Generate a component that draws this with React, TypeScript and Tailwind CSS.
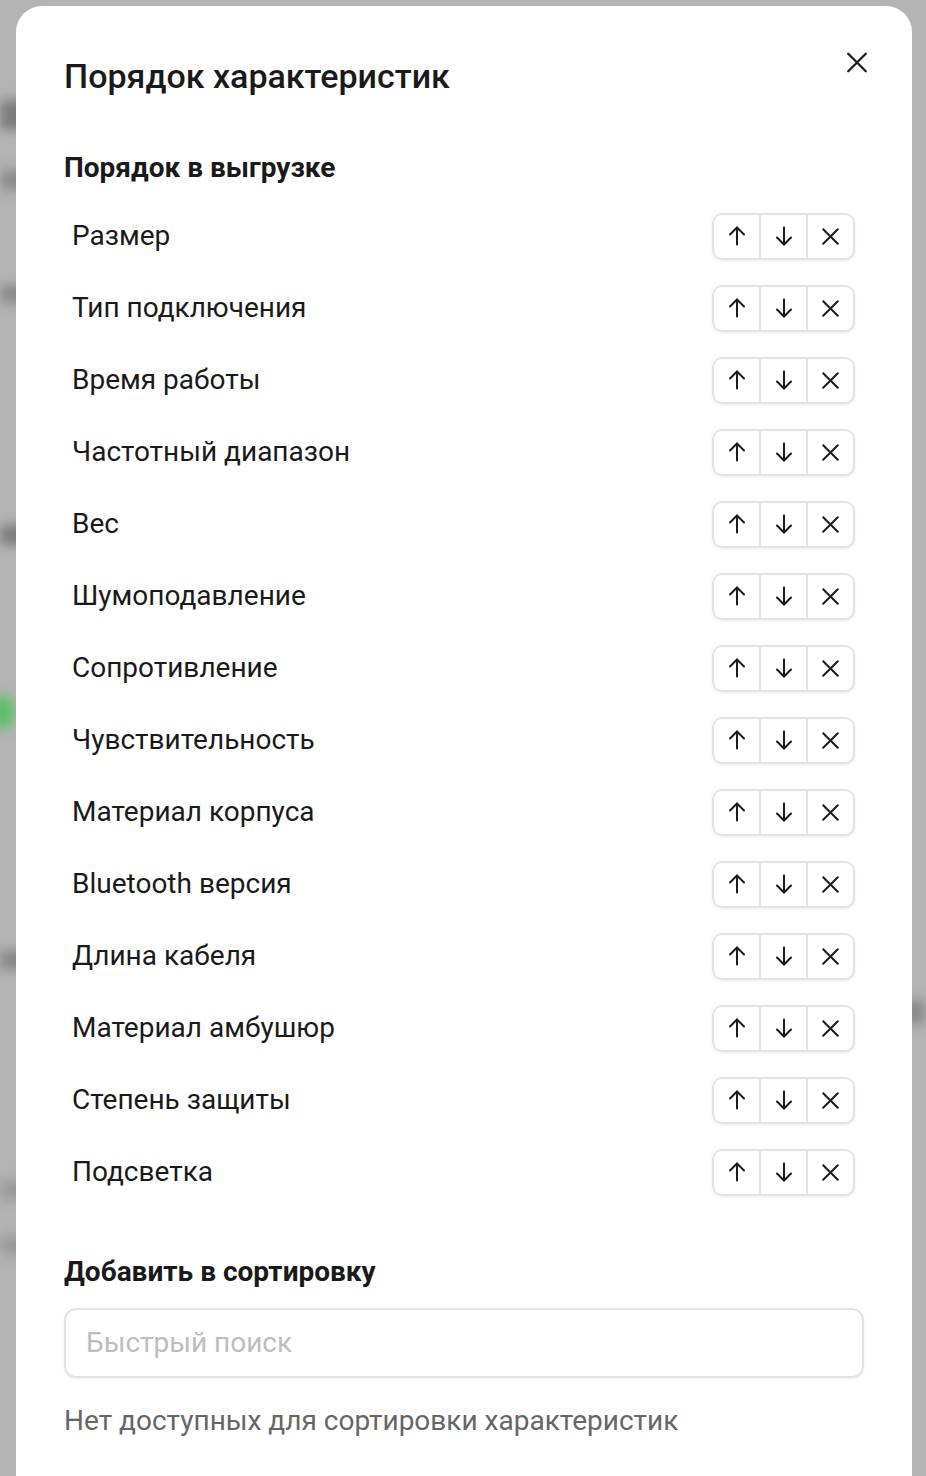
import React from "react";

const items = [
  "Размер",
  "Тип подключения",
  "Время работы",
  "Частотный диапазон",
  "Вес",
  "Шумоподавление",
  "Сопротивление",
  "Чувствительность",
  "Материал корпуса",
  "Bluetooth версия",
  "Длина кабеля",
  "Материал амбушюр",
  "Степень защиты",
  "Подсветка",
];

function UpIcon() {
  return (
    <svg width="24" height="24" viewBox="0 0 24 24" fill="none" stroke="#1c1c1c" strokeWidth="2" strokeLinecap="round" strokeLinejoin="round">
      <path d="M5 10.5l7-7 7 7" />
      <path d="M12 3.5v17" />
    </svg>
  );
}

function DownIcon() {
  return (
    <svg width="24" height="24" viewBox="0 0 24 24" fill="none" stroke="#1c1c1c" strokeWidth="2" strokeLinecap="round" strokeLinejoin="round">
      <path d="M5 13.5l7 7 7-7" />
      <path d="M12 3.5v17" />
    </svg>
  );
}

function XIcon({ size = 18, sw = 2.2 }: { size?: number; sw?: number }) {
  return (
    <svg width={size} height={size} viewBox="0 0 24 24" fill="none" stroke="#1c1c1c" strokeWidth={sw} strokeLinecap="round">
      <path d="M5 5l14 14" />
      <path d="M19 5L5 19" />
    </svg>
  );
}

export default function App() {
  return (
    <div
      className="relative h-[1476px] overflow-hidden bg-[#b4b4b4] pl-[16px] pr-[14px] pt-[6px]"
      style={{ fontFamily: "Roboto, 'Noto Sans', sans-serif" }}
    >
      {/* blurred page behind */}
      <div className="absolute left-0 top-[100px] h-[30px] w-[40px] rounded bg-[#7a7a7a] blur-[6px]" />
      <div className="absolute left-0 top-[170px] h-[20px] w-[30px] rounded bg-[#8a8a8a] blur-[6px]" />
      <div className="absolute left-0 top-[285px] h-[18px] w-[30px] rounded bg-[#888] blur-[6px]" />
      <div className="absolute left-0 top-[525px] h-[20px] w-[30px] rounded bg-[#7a7a7a] blur-[6px]" />
      <div className="absolute left-[-10px] top-[695px] h-[34px] w-[24px] rounded-full bg-[#5cbf6a] blur-[6px]" />
      <div className="absolute left-0 top-[950px] h-[20px] w-[30px] rounded bg-[#888] blur-[6px]" />
      <div className="absolute right-0 top-[1000px] h-[24px] w-[30px] rounded bg-[#8a8a8a] blur-[6px]" />
      <div className="absolute left-0 top-[1180px] h-[20px] w-[30px] rounded bg-[#999] blur-[6px]" />
      <div className="absolute left-0 top-[1235px] h-[20px] w-[30px] rounded bg-[#999] blur-[6px]" />

      <div className="relative h-[1500px] rounded-t-[26px] bg-white px-[48px] pt-[50px] text-[#1a1a1a]">
        <button className="absolute right-[40px] top-[41px] flex h-[30px] w-[30px] items-center justify-center">
          <XIcon size={31} sw={1.9} />
        </button>

        <h1 className="text-[34px] font-medium leading-[40px]">Порядок характеристик</h1>

        <h2 className="mt-[56px] text-[28px] font-bold leading-[32px]">Порядок в выгрузке</h2>

        <div className="mt-[16px] flex flex-col">
          {items.map((name) => (
            <div key={name} className="flex h-[72px] items-center justify-between pl-[8px] pr-[9px]">
              <span className="text-[28px] leading-[34px]">{name}</span>
              <div className="flex h-[47px] w-[143px] overflow-hidden rounded-[10px] border-2 border-[#e4e4e4] shadow-[0_1px_3px_rgba(0,0,0,0.08)]">
                <button className="flex flex-1 items-center justify-center border-r-2 border-[#e4e4e4]">
                  <UpIcon />
                </button>
                <button className="flex flex-1 items-center justify-center border-r-2 border-[#e4e4e4]">
                  <DownIcon />
                </button>
                <button className="flex flex-1 items-center justify-center">
                  <XIcon size={25} sw={1.9} />
                </button>
              </div>
            </div>
          ))}
        </div>

        <h2 className="mt-[48px] text-[28px] font-bold leading-[32px]">Добавить в сортировку</h2>

        <div className="mt-[20px] flex h-[70px] items-center rounded-[12px] border-2 border-[#e4e4e4] px-[20px] shadow-[0_1px_3px_rgba(0,0,0,0.06)]">
          <span className="text-[28px] text-[#bdbdbd]">Быстрый поиск</span>
        </div>

        <p className="mt-[26px] text-[28px] leading-[34px] text-[#666666]">
          Нет доступных для сортировки характеристик
        </p>
      </div>
    </div>
  );
}
